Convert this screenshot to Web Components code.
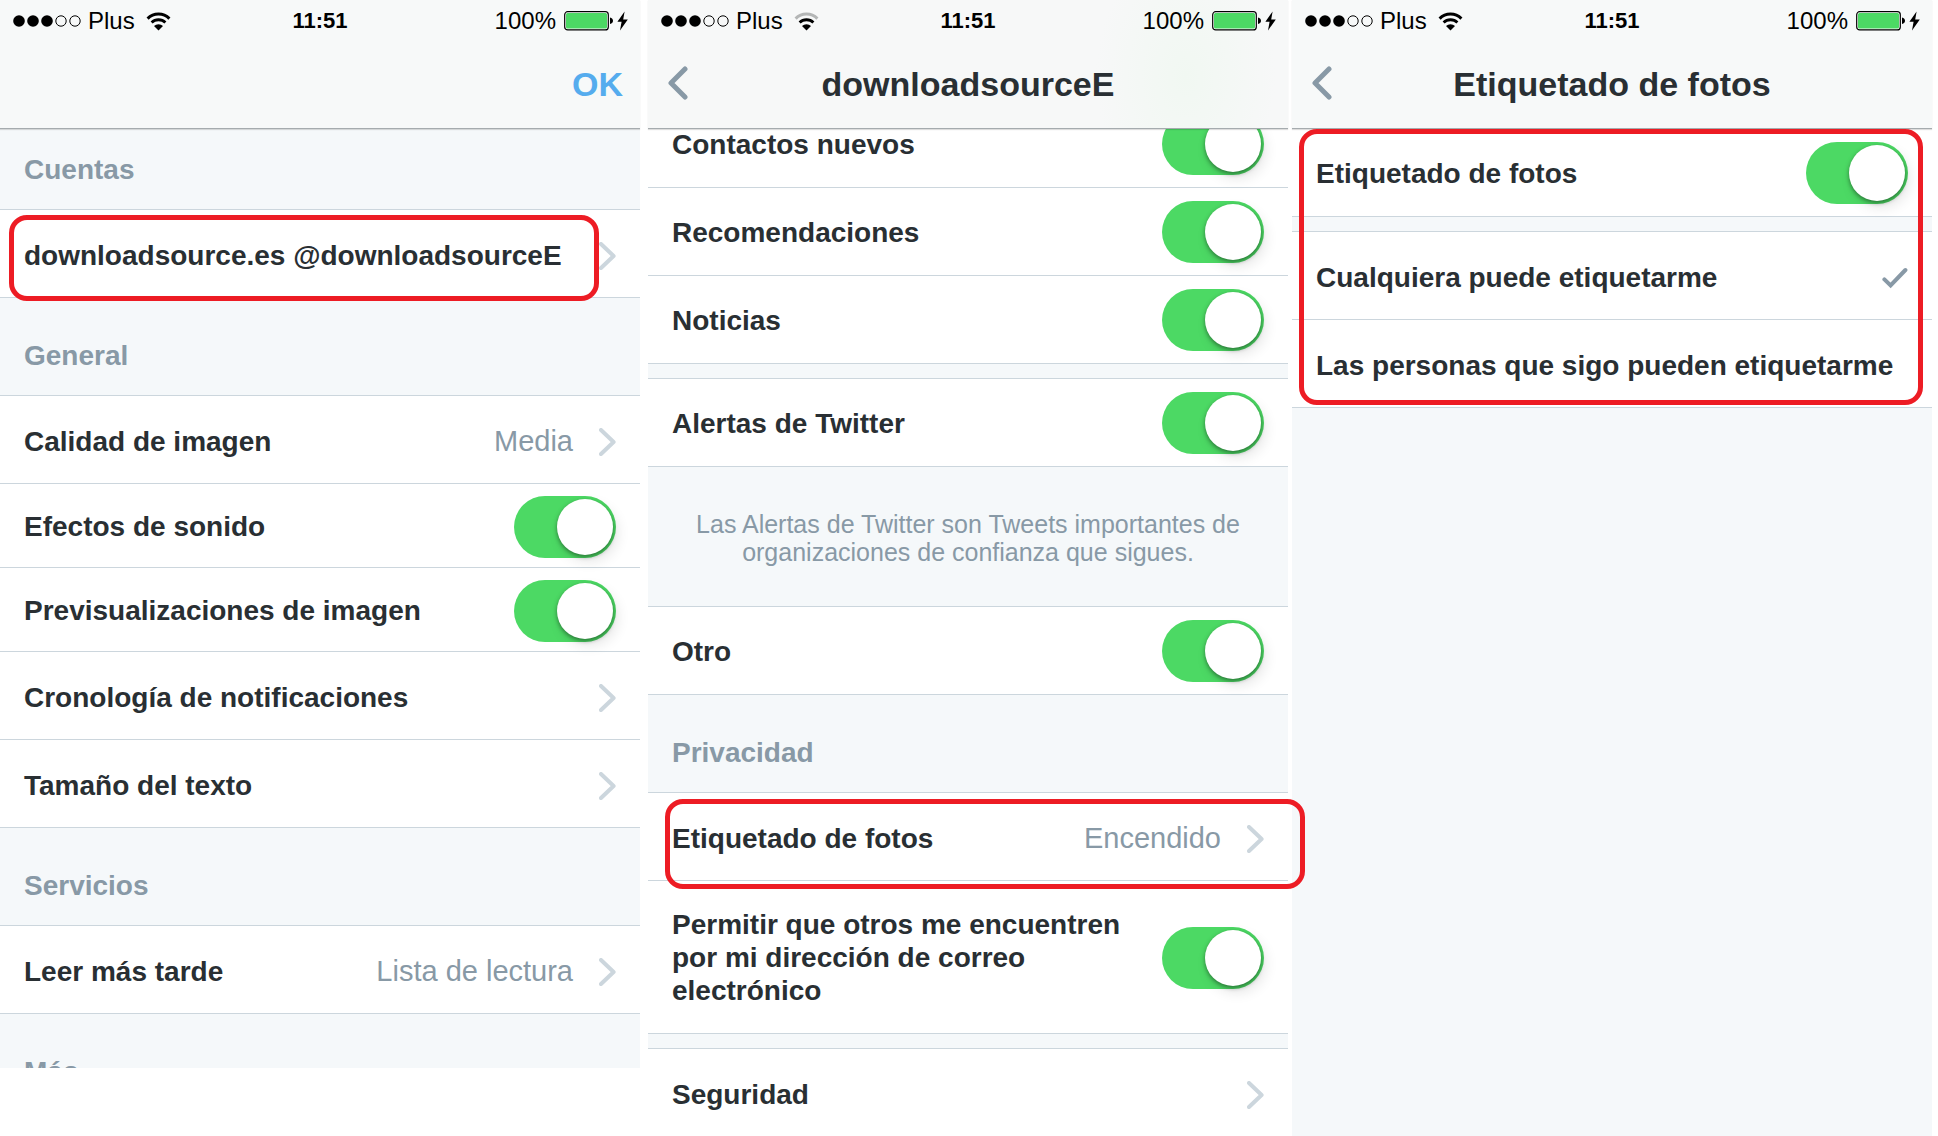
<!DOCTYPE html>
<html lang="es">
<head>
<meta charset="utf-8">
<title>Ajustes</title>
<style>
    html, body { height: 100%; }
    body { margin: 0; background: #fff; overflow: hidden; font-family: "Liberation Sans", Arial, sans-serif; color: #292f33; }
    main { display: flex; height: 100%; padding-right: 6px; box-sizing: border-box; }
    app-screen { flex: 1 1 0; }
    app-screen + app-screen { margin-left: 8px; }
    app-screen:last-child { margin-left: 4px; }
</style>
</head>
<body>
<main>
    <app-screen style="--height: 1068px; --scroll: -17px">
        <nav-bar slot="bar" action="OK"></nav-bar>
        <section-title>Cuentas</section-title>
        <link-row>downloadsource.es @downloadsourceE</link-row>
        <section-title>General</section-title>
        <link-row value="Media">Calidad de imagen</link-row>
        <switch-row compact>Efectos de sonido</switch-row>
        <switch-row compact>Previsualizaciones de imagen</switch-row>
        <link-row>Cronología de notificaciones</link-row>
        <link-row>Tamaño del texto</link-row>
        <section-title>Servicios</section-title>
        <link-row value="Lista de lectura">Leer más tarde</link-row>
        <section-title>Más</section-title>
        <mark-box slot="mark" style="top: 215px; left: 9px; right: 41px; height: 86px"></mark-box>
    </app-screen>

    <app-screen style="--scroll: -29px">
        <nav-bar slot="bar" heading="downloadsourceE" weak tint></nav-bar>
        <switch-row>Contactos nuevos</switch-row>
        <switch-row>Recomendaciones</switch-row>
        <switch-row>Noticias</switch-row>
        <row-gap></row-gap>
        <switch-row>Alertas de Twitter</switch-row>
        <foot-note>Las Alertas de Twitter son Tweets importantes de organizaciones de confianza que sigues.</foot-note>
        <switch-row>Otro</switch-row>
        <section-title>Privacidad</section-title>
        <link-row value="Encendido">Etiquetado de fotos</link-row>
        <switch-row>Permitir que otros me encuentren por mi dirección de correo electrónico</switch-row>
        <row-gap></row-gap>
        <link-row>Seguridad</link-row>
        <mark-box slot="mark" style="top: 799px; left: 17px; right: -17px; height: 90px"></mark-box>
    </app-screen>

    <app-screen>
        <nav-bar slot="bar" heading="Etiquetado de fotos"></nav-bar>
        <switch-row>Etiquetado de fotos</switch-row>
        <row-gap></row-gap>
        <choice-row checked>Cualquiera puede etiquetarme</choice-row>
        <choice-row>Las personas que sigo pueden etiquetarme</choice-row>
        <mark-box slot="mark" style="top: 129px; left: 7px; right: 9px; height: 276px"></mark-box>
    </app-screen>
</main>

<script>
    const ROW = `
        :host { display: block; background: #fff; border-bottom: 1px solid #ccd6dd; box-sizing: border-box; min-height: 88px; font-size: 28px; line-height: 33px; font-weight: bold; }
        .row { display: flex; align-items: center; width: 100%; min-height: 87px; padding: 4px 24px 0; box-sizing: border-box; }
        .label { flex: 1; }
    `;

    class Base extends HTMLElement {
        connectedCallback() {
            this.attachShadow({mode: "open"}).innerHTML = this.render();
        }
        attr(name) {
            return this.getAttribute(name) || "";
        }
    }

    customElements.define("app-screen", class extends Base {
        render() {
            return `<style>
                :host { display: flex; flex-direction: column; position: relative; min-width: 0; height: var(--height, 100%); background: #f5f8fa; }
                .list { flex: 1; min-height: 0; overflow: hidden; }
                .scroll { margin-top: var(--scroll, 0); }
            </style>
            <slot name="bar"></slot>
            <div class="list"><div class="scroll"><slot></slot></div></div>
            <slot name="mark"></slot>`;
        }
    });

    customElements.define("status-bar", class extends Base {
        render() {
            const top = this.hasAttribute("weak") ? "#b4b6b6" : "#000";
            return `<style>
                :host { display: grid; grid-template-columns: 1fr auto 1fr; align-items: center; height: 40px; padding: 2px 12px 0; box-sizing: border-box; color: #000; font-size: 24px; line-height: 28px; }
                div { display: flex; align-items: center; }
                .right { justify-content: flex-end; }
                .dots { margin-right: 7px; }
                .wifi { margin-left: 11px; }
                .battery { margin-left: 8px; }
                .bolt { margin-left: 4px; }
                b { font-size: 22px; }
            </style>
            <div>
                <svg class="dots" width="69" height="14" viewBox="0 0 69 14">
                    <circle cx="7" cy="7" r="5.8"/><circle cx="21" cy="7" r="5.8"/><circle cx="35" cy="7" r="5.8"/>
                    <circle cx="49" cy="7" r="5.2" fill="none" stroke="#000"/><circle cx="63" cy="7" r="5.2" fill="none" stroke="#000"/>
                </svg>
                <span>Plus</span>
                <svg class="wifi" width="25" height="19" viewBox="0 0 25 19">
                    <path d="M1.6 6.6A15.4 15.4 0 0 1 23.4 6.6" fill="none" stroke="${top}" stroke-width="3"/>
                    <path d="M5.6 10.6A9.8 9.8 0 0 1 19.4 10.6" fill="none" stroke="#000" stroke-width="2.8"/>
                    <path d="M12.5 18.6L8 14A6.4 6.4 0 0 1 17 14Z"/>
                </svg>
            </div>
            <b>11:51</b>
            <div class="right">
                <span>100%</span>
                <svg class="battery" width="49" height="20" viewBox="0 0 49 20">
                    <rect x=".7" y=".7" width="43.6" height="18.2" rx="3" fill="#fff" stroke="#000" stroke-width="1.2"/>
                    <rect x="2" y="2" width="41" height="15.6" rx="1.5" fill="#4cd964"/>
                    <path d="M46 6.5q3 .8 3 3.3t-3 3.3z"/>
                </svg>
                <svg class="bolt" width="11" height="20" viewBox="0 0 11 20"><path d="M7.6 .4L.4 10.8H4.6L3 19.6L10.8 8.4H6.2Z"/></svg>
            </div>`;
        }
    });

    customElements.define("nav-bar", class extends Base {
        render() {
            const heading = this.attr("heading");
            return `<style>
                :host { display: block; position: relative; z-index: 1; background: #f7f9f9; border-bottom: 1px solid #a5abae; box-shadow: 0 1px 1px #0002; }
                :host([tint]) { background: radial-gradient(ellipse 90px 130px at 84% 60%, #f1f8f2, #f1f8f200), #f7f8f8; }
                .nav { display: grid; grid-template-columns: 60px 1fr 60px; align-items: center; height: 88px; padding: 0 17px; }
                h1 { grid-column: 2; margin: 0; font-size: 34px; line-height: 40px; text-align: center; }
                button { border: 0; padding: 0; background: none; font: bold 34px/40px "Liberation Sans", Arial, sans-serif; }
                .back { justify-self: start; display: flex; }
                .action { grid-column: 3; justify-self: end; color: #55acee; }
            </style>
            <status-bar ${this.hasAttribute("weak") ? "weak" : ""}></status-bar>
            <div class="nav">
                ${heading ? `<button class="back" aria-label="Atrás">
                    <svg width="24" height="36" viewBox="0 0 24 36"><path d="M20 3L6 17L20 31" fill="none" stroke="#8899a6" stroke-width="5" stroke-linecap="round" stroke-linejoin="round"/></svg>
                </button><h1>${heading}</h1>` : ""}
                ${this.attr("action") ? `<button class="action">${this.attr("action")}</button>` : ""}
            </div>`;
        }
    });

    customElements.define("section-title", class extends Base {
        render() {
            return `<style>
                :host { display: flex; align-items: flex-end; height: 98px; box-sizing: border-box; padding: 0 24px 23px; border-bottom: 1px solid #ccd6dd; background: #f5f8fa; }
                h2 { margin: 0; color: #8899a6; font-size: 28px; line-height: 33px; }
            </style><h2><slot></slot></h2>`;
        }
    });

    customElements.define("link-row", class extends Base {
        render() {
            return `<style>${ROW}
                a { color: inherit; text-decoration: none; }
                .value { color: #8899a6; font-size: 29px; font-weight: normal; }
                svg { margin-left: 26px; }
            </style>
            <a class="row" href="#">
                <span class="label"><slot></slot></span>
                <span class="value">${this.attr("value")}</span>
                <svg width="17" height="28" viewBox="0 0 17 28"><path d="M2 2L14.6 14L2 26" fill="none" stroke="#ccd6dd" stroke-width="4" stroke-linecap="round" stroke-linejoin="round"/></svg>
            </a>`;
        }
    });

    customElements.define("switch-row", class extends Base {
        render() {
            return `<style>${ROW}
                .row { padding-block: 27px 26px; }
                .label { margin-right: 24px; }
                :host([compact]) { min-height: 84px; }
                :host([compact]) .row { min-height: 83px; padding-block: 2px 0; }
                input { appearance: none; flex: none; width: 102px; height: 62px; margin: -20px 0; padding: 3px; box-sizing: border-box; border-radius: 31px; background: #ccd6dd; }
                input::before { content: ""; display: block; width: 56px; height: 56px; border-radius: 50%; background: #fff; box-shadow: 0 2px 4px #0006, 4px 6px 14px #0000001c; }
                input:checked { background: #4cd964; }
                input:checked::before { margin-left: auto; }
            </style>
            <label class="row"><span class="label"><slot></slot></span><input type="checkbox" role="switch" checked></label>`;
        }
    });

    customElements.define("choice-row", class extends Base {
        render() {
            return `<style>${ROW}
                .label { white-space: nowrap; }
                input { appearance: none; width: 0; height: 0; margin: 0; }
                svg { display: none; flex: none; }
                input:checked + svg { display: block; }
            </style>
            <label class="row">
                <span class="label"><slot></slot></span>
                <input type="radio" ${this.hasAttribute("checked") ? "checked" : ""}>
                <svg width="26" height="22" viewBox="0 0 26 22"><path d="M2.4 12.4L8.6 18.4L23.4 3" fill="none" stroke="#8899a6" stroke-width="4" stroke-linecap="round"/></svg>
            </label>`;
        }
    });

    customElements.define("row-gap", class extends Base {
        render() {
            return `<style>:host { display: block; height: 14px; background: #f5f8fa; border-bottom: 1px solid #ccd6dd; }</style>`;
        }
    });

    customElements.define("foot-note", class extends Base {
        render() {
            return `<style>
                :host { display: block; padding: 43px 40px 40px; border-bottom: 1px solid #ccd6dd; background: #f5f8fa; }
                p { margin: 0; color: #8899a6; font-size: 25px; line-height: 28px; text-align: center; }
            </style><p><slot></slot></p>`;
        }
    });

    customElements.define("mark-box", class extends Base {
        render() {
            return `<style>:host { position: absolute; z-index: 2; box-sizing: border-box; border: 5px solid #ed1c24; border-radius: 18px; pointer-events: none; }</style>`;
        }
    });
</script>
</body>
</html>
